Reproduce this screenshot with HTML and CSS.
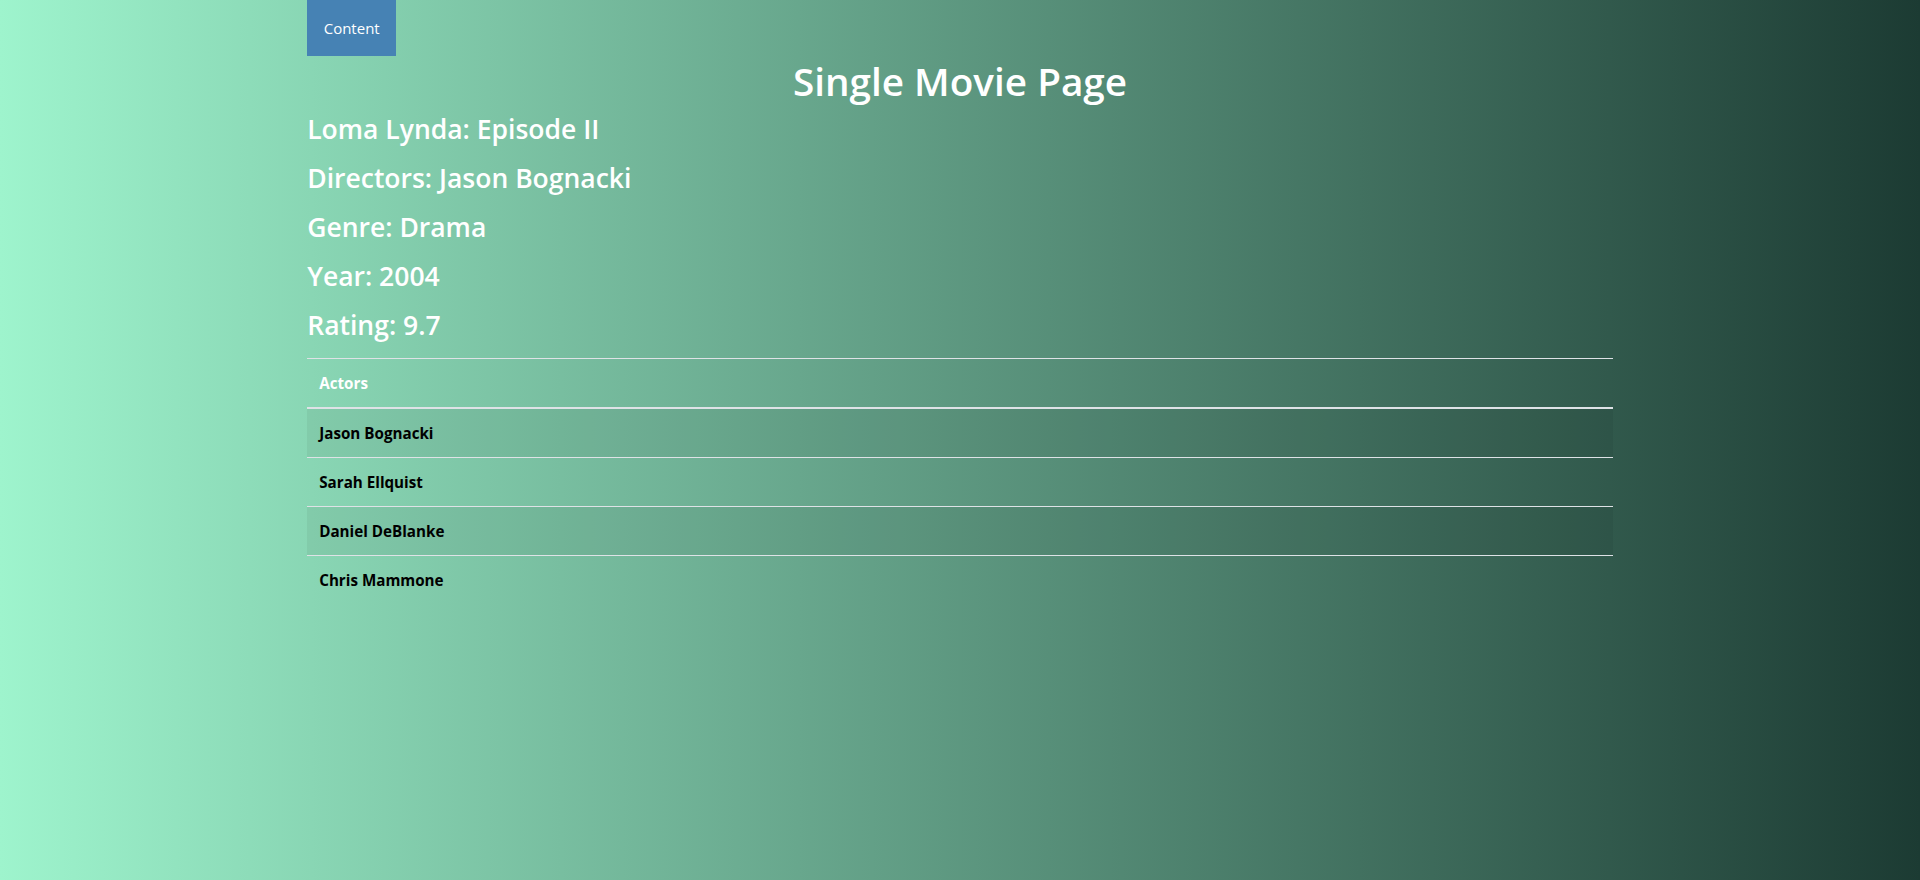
FILE: index.html
```html
<!DOCTYPE html>
<html lang="en">
<head>
<meta charset="utf-8">
<title>Single Movie Page</title>
<link rel="stylesheet" href="styles.css">
</head>
<body>
<div class="page">
  <nav class="nav">
    <a class="nav-btn" href="#">Content</a>
  </nav>
  <h1 class="title">Single Movie Page</h1>
  <h3 class="info">Loma Lynda: Episode II</h3>
  <h3 class="info">Directors: Jason Bognacki</h3>
  <h3 class="info">Genre: Drama</h3>
  <h3 class="info">Year: 2004</h3>
  <h3 class="info">Rating: 9.7</h3>
  <table class="actors">
    <thead>
      <tr><th class="head">Actors</th></tr>
    </thead>
    <tbody>
      <tr class="striped"><th>Jason Bognacki</th></tr>
      <tr><th>Sarah Ellquist</th></tr>
      <tr class="striped"><th>Daniel DeBlanke</th></tr>
      <tr><th>Chris Mammone</th></tr>
    </tbody>
  </table>
</div>
</body>
</html>
```
FILE: styles.css
```css
html, body {
  margin: 0;
  padding: 0;
}
body {
  min-height: 880px;
  background: linear-gradient(to right, #9ef4cd, #1c3b33);
  font-family: "Open Sans", "Noto Sans", sans-serif;
  font-size: 16px;
  line-height: 1.5;
  color: #000;
}
.page {
  width: 68%;
  margin: 0 auto;
}
.nav {
  display: flex;
}
.nav-btn {
  display: block;
  background: #4682b4;
  color: #fff;
  text-decoration: none;
  font-size: 15px;
  line-height: 24px;
  padding: 16px 16.5px;
}
.title {
  margin: 1px 0 8px;
  text-align: center;
  color: #fff;
  font-size: 38.7px;
  line-height: 48px;
  font-weight: 600;
}
.info {
  margin: 0 0 15.4px;
  color: #fff;
  font-size: 26.5px;
  line-height: 33.6px;
  font-weight: 600;
}
.actors {
  width: 100%;
  border-collapse: collapse;
}
.actors th {
  text-align: left;
  padding: 12px;
  border-top: 1px solid #dee2e6;
  font-size: 15.2px;
  line-height: 24px;
  font-weight: 700;
  color: #000;
}
.actors th.head {
  color: #fff;
  border-bottom: 2px solid #dee2e6;
}
.actors tr.striped {
  background: rgba(0, 0, 0, 0.05);
}
```
